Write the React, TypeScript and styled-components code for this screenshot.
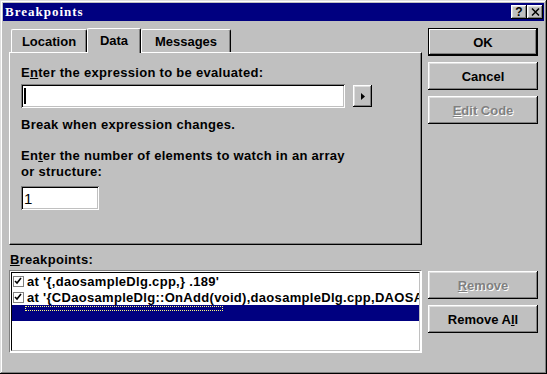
import React from 'react';
import styled, { createGlobalStyle } from 'styled-components';

const GlobalStyle = createGlobalStyle`
  html, body {
    margin: 0;
    padding: 0;
    background: #c0c0c0;
  }
  body {
    font-family: "Liberation Sans", Arial, sans-serif;
  }
`;

const raised = `
  box-shadow: inset -1px -1px #000000, inset 1px 1px #ffffff,
    inset -2px -2px #808080, inset 2px 2px #dfdfdf;
`;

const sunken = `
  box-shadow: inset 1px 1px #808080, inset -1px -1px #ffffff,
    inset 2px 2px #000000, inset -2px -2px #c0c0c0;
`;

const Window = styled.div`
  width: 547px;
  height: 374px;
  box-sizing: border-box;
  padding: 3px;
  background: #c0c0c0;
  display: flex;
  flex-direction: column;
  box-shadow: inset -1px -1px #000000, inset 1px 1px #dfdfdf,
    inset -2px -2px #808080, inset 2px 2px #ffffff;
  font: bold 13px "Liberation Sans", Arial, sans-serif;
  color: #000;
`;

const TitleBar = styled.div`
  height: 18px;
  background: #000080;
  display: flex;
  align-items: center;
  padding: 0 1px 0 2px;
`;

const Title = styled.span`
  flex: 1;
  color: #ffffff;
  font: bold 13px "Liberation Serif", "DejaVu Serif", serif;
  letter-spacing: 1px;
`;

const CaptionButton = styled.div`
  width: 16px;
  height: 14px;
  box-sizing: border-box;
  background: #c0c0c0;
  ${raised}
  display: flex;
  align-items: center;
  justify-content: center;
  font: bold 12px "Liberation Sans", Arial, sans-serif;
  line-height: 1;
`;

const Body = styled.div`
  flex: 1;
  display: flex;
  gap: 6px;
  padding: 7px 6px 0 6px;
`;

const LeftColumn = styled.div`
  width: 413px;
  display: flex;
  flex-direction: column;
`;

const TabStrip = styled.div`
  height: 24px;
  display: flex;
  align-items: flex-end;
  padding-left: 2px;
  position: relative;
  z-index: 1;
`;

const Tab = styled.div<{ $active?: boolean; $width: number }>`
  width: ${p => p.$width}px;
  height: ${p => (p.$active ? 25 : 23)}px;
  margin-bottom: ${p => (p.$active ? -1 : 0)}px;
  box-sizing: border-box;
  background: #c0c0c0;
  border-top: 1px solid #ffffff;
  border-left: 1px solid #ffffff;
  border-right: 1px solid #000000;
  border-radius: 2px 2px 0 0;
  box-shadow: inset -1px 0 #808080;
  display: flex;
  align-items: center;
  justify-content: center;
  padding-bottom: ${p => (p.$active ? 2 : 0)}px;
`;

const Panel = styled.div`
  height: 193px;
  box-sizing: border-box;
  border-top: 1px solid #ffffff;
  border-left: 1px solid #ffffff;
  border-right: 1px solid #000000;
  border-bottom: 1px solid #000000;
  box-shadow: inset -1px -1px #808080;
  padding: 12px 0 0 11px;
  display: flex;
  flex-direction: column;
`;

const Label = styled.div<{ $gap?: number }>`
  line-height: 16px;
  margin-top: ${p => p.$gap ?? 0}px;
  white-space: nowrap;
  letter-spacing: 0.3px;
`;

const InputRow = styled.div<{ $gap?: number }>`
  display: flex;
  align-items: center;
  gap: 8px;
  margin-top: ${p => p.$gap ?? 3}px;
`;

const TextField = styled.div<{ $width: number }>`
  width: ${p => p.$width}px;
  height: 24px;
  box-sizing: border-box;
  background: #ffffff;
  ${sunken}
  padding: 0 0 0 3px;
  display: flex;
  align-items: center;
  font-size: 15px;
  font-weight: normal;
`;

const Caret = styled.span`
  width: 2px;
  height: 16px;
  background: #000;
`;

const ArrowButton = styled.div`
  width: 19px;
  height: 22px;
  box-sizing: border-box;
  background: #c0c0c0;
  ${raised}
  display: flex;
  align-items: center;
  justify-content: center;
`;

const ListLabel = styled.div`
  margin-top: 7px;
  line-height: 16px;
  height: 18px;
  padding-left: 1px;
  letter-spacing: 0.3px;
`;

const ListBox = styled.div`
  height: 83px;
  box-sizing: border-box;
  background: #ffffff;
  border-top: 1px solid #808080;
  border-left: 1px solid #808080;
  border-right: 1px solid #ffffff;
  border-bottom: 1px solid #ffffff;
  padding: 1px;
`;

const ListInner = styled.div`
  height: 100%;
  box-sizing: border-box;
  border: 1px solid #000000;
  border-right-color: #c0c0c0;
  border-bottom-color: #c0c0c0;
  overflow: hidden;
`;

const ListRow = styled.div<{ $selected?: boolean }>`
  height: 16px;
  display: flex;
  align-items: center;
  gap: 3px;
  padding-left: 1px;
  white-space: nowrap;
  letter-spacing: 0.3px;
  background: ${p => (p.$selected ? '#000080' : 'transparent')};
  position: relative;
`;

const CheckBox = styled.span`
  width: 11px;
  height: 11px;
  flex: none;
  box-sizing: border-box;
  border: 1px solid #808080;
  background: #fff;
  display: flex;
  align-items: center;
  justify-content: center;
`;

const FocusRect = styled.span`
  position: absolute;
  left: 13px;
  top: 1px;
  width: 198px;
  height: 5px;
  box-sizing: border-box;
  border: 1px dotted #ffff80;
`;

const RightColumn = styled.div`
  width: 110px;
  display: flex;
  flex-direction: column;
  gap: 6px;
`;

const Button = styled.div<{ $default?: boolean; $disabled?: boolean; $top?: number }>`
  height: 28px;
  box-sizing: border-box;
  background: #c0c0c0;
  margin-top: ${p => p.$top ?? 0}px;
  ${p =>
    p.$default
      ? `box-shadow: inset 0 0 0 1px #000, inset -2px -2px #000000, inset 2px 2px #ffffff,
    inset -3px -3px #808080;`
      : raised}
  display: flex;
  align-items: center;
  justify-content: center;
  color: ${p => (p.$disabled ? '#808080' : '#000')};
  text-shadow: ${p => (p.$disabled ? '1px 1px #ffffff' : 'none')};
`;

const Key = styled.span`
  text-decoration: underline;
`;

const CheckMark = () => (
  <svg width="9" height="9" viewBox="0 0 9 9">
    <path d="M1 4 L3 6 L7 1" stroke="#000" strokeWidth="1.6" fill="none" />
  </svg>
);

const App: React.FC = () => {
  return (
    <>
      <GlobalStyle />
      <Window>
        <TitleBar>
          <Title>Breakpoints</Title>
          <CaptionButton>?</CaptionButton>
          <CaptionButton>
            <svg width="9" height="8" viewBox="0 0 9 8">
              <path d="M1 0.5 L8 7.5 M8 0.5 L1 7.5" stroke="#000" strokeWidth="1.5" />
            </svg>
          </CaptionButton>
        </TitleBar>
        <Body>
          <LeftColumn>
            <TabStrip>
              <Tab $width={76}>Location</Tab>
              <Tab $width={54} $active>Data</Tab>
              <Tab $width={90}>Messages</Tab>
            </TabStrip>
            <Panel>
              <Label>
                E<Key>n</Key>ter the expression to be evaluated:
              </Label>
              <InputRow>
                <TextField $width={324}>
                  <Caret />
                </TextField>
                <ArrowButton>
                  <svg width="4" height="7" viewBox="0 0 4 7">
                    <path d="M0 0 L4 3.5 L0 7 Z" fill="#000" />
                  </svg>
                </ArrowButton>
              </InputRow>
              <Label $gap={9}>Break when expression changes.</Label>
              <Label $gap={15}>
                En<Key>t</Key>er the number of elements to watch in an array
                <br />
                or structure:
              </Label>
              <InputRow $gap={6}>
                <TextField $width={78}>1</TextField>
              </InputRow>
            </Panel>
            <ListLabel>
              <Key>B</Key>reakpoints:
            </ListLabel>
            <ListBox>
              <ListInner>
                <ListRow>
                  <CheckBox>
                    <CheckMark />
                  </CheckBox>
                  at '{'{'},daosampleDlg.cpp,{'}'} .189'
                </ListRow>
                <ListRow>
                  <CheckBox>
                    <CheckMark />
                  </CheckBox>
                  at '{'{'}CDaosampleDlg::OnAdd(void),daosampleDlg.cpp,DAOSAM
                </ListRow>
                <ListRow $selected>
                  <FocusRect />
                </ListRow>
              </ListInner>
            </ListBox>
          </LeftColumn>
          <RightColumn>
            <Button $default>OK</Button>
            <Button>Cancel</Button>
            <Button $disabled>
              <Key>E</Key>dit Code
            </Button>
            <Button $disabled $top={141}>
              <Key>R</Key>emove
            </Button>
            <Button>
              Remove A<Key>l</Key>l
            </Button>
          </RightColumn>
        </Body>
      </Window>
    </>
  );
};

export default App;
